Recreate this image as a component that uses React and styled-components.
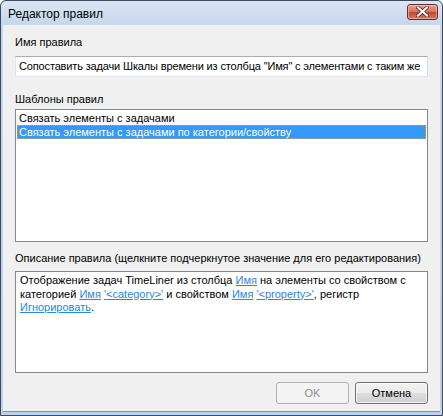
import React from 'react';
import styled, { createGlobalStyle } from 'styled-components';

const GlobalStyle = createGlobalStyle`
  html, body {
    margin: 0;
    padding: 0;
    background: #ffffff;
  }
  body {
    font-family: "Liberation Sans", Arial, sans-serif;
    font-size: 11px;
    color: #000;
  }
`;

const Window = styled.div`
  width: 443px;
  height: 416px;
  box-sizing: border-box;
  border: 1px solid #3a4a5c;
  border-radius: 6px 6px 0 0;
  background: linear-gradient(#dbe6f3, #c5d7ec 24px, #bcd2ea);
  display: flex;
  flex-direction: column;
  overflow: hidden;
`;

const TitleBar = styled.div`
  height: 24px;
  display: flex;
  align-items: center;
  justify-content: space-between;
  padding: 0 4px 0 7px;
  flex-shrink: 0;
`;

const Title = styled.span`
  font-size: 12px;
  color: #000;
  padding-top: 1px;
`;

const CloseButton = styled.div`
  width: 31px;
  height: 16px;
  margin-top: -3px;
  box-sizing: border-box;
  border: 1px solid #6b2b2b;
  border-radius: 3px;
  background: linear-gradient(#e8a493, #d0705d 50%, #bf4630 51%, #d27b64);
  display: flex;
  align-items: center;
  justify-content: center;
  box-shadow: inset 0 0 0 1px rgba(255, 210, 200, 0.5);
`;

const Client = styled.div`
  flex: 1;
  margin: 0 2px 3px 2px;
  background: #f0f0f0;
  border-bottom: 1px solid #4aa3dc;
  padding: 10px 12px 0 12px;
  display: flex;
  flex-direction: column;
`;

const Label = styled.div`
  height: 14px;
  line-height: 14px;
  white-space: nowrap;
  margin-bottom: ${p => p.gap}px;
`;

const TextInput = styled.div`
  height: 21px;
  box-sizing: border-box;
  border: 1px solid #abadb3;
  border-left-color: #e2e3ea;
  border-right-color: #dbdfe6;
  border-bottom-color: #e3e9ef;
  background: #fff;
  padding: 0 3px;
  line-height: 19px;
  letter-spacing: -0.15px;
  white-space: nowrap;
  overflow: hidden;
  margin-bottom: 15px;
`;

const ListBox = styled.div`
  height: ${p => p.h}px;
  box-sizing: border-box;
  border: 1px solid #828790;
  background: #fff;
  padding: 1px;
  margin-bottom: ${p => p.gap}px;
`;

const ListItem = styled.div`
  height: 14px;
  line-height: 14px;
  padding: 0 2px;
  box-sizing: border-box;
  white-space: nowrap;
  background: ${p => (p.selected ? '#3399ff' : 'transparent')};
  color: ${p => (p.selected ? '#fff' : '#000')};
  outline: ${p => (p.selected ? '1px dotted #d8a040' : 'none')};
  outline-offset: -1px;
`;

const Description = styled.div`
  padding: 1px 3px;
  line-height: 13.5px;
`;

const Link = styled.span`
  color: #2b86e0;
  text-decoration: underline;
`;

const ButtonRow = styled.div`
  display: flex;
  justify-content: flex-end;
  gap: 6px;
`;

const Button = styled.div`
  width: 73px;
  height: 22px;
  box-sizing: border-box;
  border: 1px solid ${p => (p.disabled ? '#adb2b5' : '#707070')};
  border-radius: 3px;
  background: ${p =>
    p.disabled
      ? '#f4f4f4'
      : 'linear-gradient(#f2f2f2, #ebebeb 50%, #dddddd 51%, #cfcfcf)'};
  color: ${p => (p.disabled ? '#8d8d8d' : '#000')};
  display: flex;
  align-items: center;
  justify-content: center;
  box-shadow: ${p => (p.disabled ? 'none' : 'inset 0 0 0 1px rgba(255,255,255,0.7)')};
`;

function App() {
  return (
    <>
      <GlobalStyle />
      <Window>
        <TitleBar>
          <Title>Редактор правил</Title>
          <CloseButton>
            <svg width="13" height="11" viewBox="0 0 13 11">
              <path
                d="M2 1.5 L11 9.5 M11 1.5 L2 9.5"
                stroke="#4a2020"
                strokeWidth="3.6"
                strokeLinecap="square"
              />
              <path
                d="M2 1.5 L11 9.5 M11 1.5 L2 9.5"
                stroke="#ffffff"
                strokeWidth="2.2"
                strokeLinecap="square"
              />
            </svg>
          </CloseButton>
        </TitleBar>
        <Client>
          <Label gap={7}>Имя правила</Label>
          <TextInput>Сопоставить задачи Шкалы времени из столбца "Имя" с элементами с таким же</TextInput>
          <Label gap={3}>Шаблоны правил</Label>
          <ListBox h={133} gap={9}>
            <ListItem>Связать элементы с задачами</ListItem>
            <ListItem selected>Связать элементы с задачами по категории/свойству</ListItem>
          </ListBox>
          <Label gap={6}>Описание правила (щелкните подчеркнутое значение для его редактирования)</Label>
          <ListBox h={102} gap={9}>
            <Description>
              Отображение задач TimeLiner из столбца <Link>Имя</Link> на элементы со свойством с
              <br />
              категорией <Link>Имя</Link> <Link>'&lt;category&gt;'</Link> и свойством{' '}
              <Link>Имя</Link> <Link>'&lt;property&gt;'</Link>, регистр
              <br />
              <Link>Игнорировать</Link>.
            </Description>
          </ListBox>
          <ButtonRow>
            <Button disabled>OK</Button>
            <Button>Отмена</Button>
          </ButtonRow>
        </Client>
      </Window>
    </>
  );
}

export default App;
